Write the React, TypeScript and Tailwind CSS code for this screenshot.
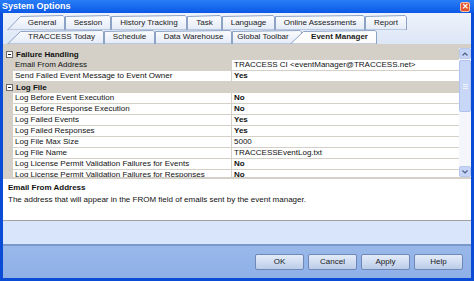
import React from "react";

type Row = { cat?: string; name?: string; value?: string; bold?: boolean; selected?: boolean };

const rows: Row[] = [
  { cat: "Failure Handling" },
  { name: "Email From Address", value: "TRACCESS CI <eventManager@TRACCESS.net>", selected: true },
  { name: "Send Failed Event Message to Event Owner", value: "Yes", bold: true },
  { cat: "Log File" },
  { name: "Log Before Event Execution", value: "No", bold: true },
  { name: "Log Before Response Execution", value: "No", bold: true },
  { name: "Log Failed Events", value: "Yes", bold: true },
  { name: "Log Failed Responses", value: "Yes", bold: true },
  { name: "Log File Max Size", value: "5000" },
  { name: "Log File Name", value: "TRACCESSEventLog.txt" },
  { name: "Log License Permit Validation Failures for Events", value: "No", bold: true },
  { name: "Log License Permit Validation Failures for Responses", value: "No", bold: true },
];

// tab shape drawn as svg so the slanted edges come out right
const Tab: React.FC<{
  label: string;
  w: number;
  h: number;
  cls: string;
  slant?: boolean;
  active?: boolean;
}> = ({ label, w, h, cls, slant, active }) => {
  const s = slant ? 13 : 0;
  const pts = `0.5,${h} ${s + 0.5},1.5 ${w - 2},0.5 ${w - 0.5},2 ${w - 0.5},${h}`;
  const id = active ? "tabA" : "tabI";
  return (
    <div className={`relative flex shrink-0 items-center justify-center ${cls}`}>
      <svg className="absolute inset-0" width={w} height={h}>
        <defs>
          <linearGradient id={id} x1="0" y1="0" x2="0" y2="1">
            <stop offset="0" stopColor={active ? "#ffffff" : "#fbfcfe"} />
            <stop offset="1" stopColor={active ? "#fbfbfd" : "#e4ebf7"} />
          </linearGradient>
        </defs>
        <polygon points={pts} fill={`url(#${id})`} stroke="#8da3c6" strokeWidth="1" />
      </svg>
      <span
        className={`relative text-[8px] text-[#1a1a1a] ${active ? "font-bold" : ""} ${slant ? "pl-[12px]" : ""}`}
      >
        {label}
      </span>
    </div>
  );
};

const Btn: React.FC<{ label: string }> = ({ label }) => (
  <button className="flex h-[16px] w-[49px] items-center justify-center rounded-[2px] border border-[#7088b8] bg-gradient-to-b from-[#e4ecf9] to-[#bccde9] text-[8px] text-[#1a1a1a]">
    {label}
  </button>
);

export default function App() {
  return (
    <div
      className="flex h-[281px] w-[474px] flex-col bg-[#0b4cd6] px-[3px] pb-[3px]"
      style={{ fontFamily: '"Liberation Sans", Arial, sans-serif' }}
    >
      {/* title bar */}
      <div className="-mx-[3px] flex h-[13px] items-center justify-between bg-gradient-to-b from-[#2a7df7] to-[#0a58e6] pl-[2px] pr-[4px]">
        <span className="text-[9px] font-bold text-white">System Options</span>
        <div className="flex h-[10px] w-[10px] items-center justify-center rounded-[2px] border border-[#f3c0aa] bg-[#e2552c] text-[8px] font-bold leading-none text-white">
          ✕
        </div>
      </div>

      <div className="flex flex-1 flex-col bg-[#d4d0c8]">
        {/* tabs */}
        <div className="flex h-[31px] flex-col bg-gradient-to-b from-[#eef3fb] to-[#dce6f6] pt-[2px] pl-[4px]">
          <div className="flex h-[15px]">
            <Tab label="General" w={58} h={15} cls="w-[58px] h-[15px]" slant />
            <Tab label="Session" w={46} h={15} cls="w-[46px] h-[15px]" />
            <Tab label="History Tracking" w={76} h={15} cls="w-[76px] h-[15px]" />
            <Tab label="Task" w={35} h={15} cls="w-[35px] h-[15px]" />
            <Tab label="Language" w={53} h={15} cls="w-[53px] h-[15px]" />
            <Tab label="Online Assessments" w={90} h={15} cls="w-[90px] h-[15px]" />
            <Tab label="Report" w={42} h={15} cls="w-[42px] h-[15px]" />
          </div>
          <div className="flex h-[14px]">
            <Tab label="TRACCESS Today" w={97} h={14} cls="w-[97px] h-[14px]" slant />
            <Tab label="Schedule" w={51} h={14} cls="w-[51px] h-[14px]" />
            <Tab label="Data Warehouse" w={77} h={14} cls="w-[77px] h-[14px]" />
            <Tab label="Global Toolbar" w={70} h={14} cls="w-[70px] h-[14px] pr-[8px]" />
            <div className="relative z-10 -ml-[12px]">
              <Tab label="Event Manager" w={87} h={14} cls="w-[87px] h-[14px]" slant active />
            </div>
          </div>
        </div>

        {/* property grid */}
        <div className="mt-[4px] flex h-[129px] bg-white">
          <div className="flex flex-1 flex-col overflow-hidden">
            {rows.map((r, i) =>
              r.cat ? (
                <div
                  key={i}
                  className={`flex shrink-0 items-center bg-[#d4d0c8] ${i === 0 ? "h-[12px] pt-[1px]" : "h-[11px]"}`}
                >
                  <div className="flex w-[12px] justify-center">
                    <div className="flex h-[7px] w-[7px] items-center justify-center border border-[#6a6a6a] bg-white">
                      <div className="h-px w-[3px] bg-[#222]" />
                    </div>
                  </div>
                  <span className="pl-[1px] text-[8px] font-bold leading-none text-[#111]">{r.cat}</span>
                </div>
              ) : (
                <div key={i} className="flex h-[11px] shrink-0">
                  <div className="w-[10px] bg-[#d4d0c8]" />
                  <div
                    className={`flex w-[219px] items-center border-b border-r border-[#d4d0c8] pl-[2px] text-[8px] leading-none text-[#111] ${r.selected ? "bg-[#d4d0c8]" : "bg-white"}`}
                  >
                    <span className="whitespace-nowrap">{r.name}</span>
                  </div>
                  <div
                    className={`flex flex-1 items-center border-b border-[#d4d0c8] pl-[2px] text-[8px] leading-none text-[#111] ${r.bold ? "font-bold" : ""}`}
                  >
                    <span className="whitespace-nowrap">{r.value}</span>
                  </div>
                </div>
              ),
            )}
          </div>
          {/* scrollbar */}
          <div className="flex w-[12px] flex-col bg-[#f4f6fb]">
            <div className="flex h-[11px] items-center justify-center rounded-[2px] border border-[#b8c8ec] bg-[#c6d5f7]">
              <svg width="6" height="4" viewBox="0 0 6 4">
                <path d="M0.5 3.5 L3 1 L5.5 3.5" fill="none" stroke="#4d6185" strokeWidth="1.2" />
              </svg>
            </div>
            <div className="mt-[1px] flex h-[52px] flex-col items-center justify-center gap-[1px] rounded-[2px] border border-[#b0c3ee] bg-[#c8d7f8]">
              <div className="h-px w-[5px] bg-[#eef3ff]" />
              <div className="h-px w-[5px] bg-[#eef3ff]" />
              <div className="h-px w-[5px] bg-[#eef3ff]" />
            </div>
            <div className="flex-1" />
            <div className="flex h-[11px] items-center justify-center rounded-[2px] border border-[#b8c8ec] bg-[#c6d5f7]">
              <svg width="6" height="4" viewBox="0 0 6 4">
                <path d="M0.5 0.5 L3 3 L5.5 0.5" fill="none" stroke="#4d6185" strokeWidth="1.2" />
              </svg>
            </div>
          </div>
        </div>

        {/* description */}
        <div className="mt-[2px] flex h-[42px] flex-col gap-[4px] border-b border-[#a0a0a0] bg-white px-[5px] pt-[5px]">
          <span className="text-[8px] font-bold leading-none text-[#111]">Email From Address</span>
          <span className="text-[8px] leading-none text-[#111]">
            The address that will appear in the FROM field of emails sent by the event manager.
          </span>
        </div>

        <div className="h-[25px] border-b-2 border-[#7b98cc] bg-[#d8e5fb]" />

        {/* footer */}
        <div className="flex flex-1 items-center justify-end gap-[4px] bg-gradient-to-b from-[#99b8e9] to-[#8eb0e8] pr-[8px]">
          <Btn label="OK" />
          <Btn label="Cancel" />
          <Btn label="Apply" />
          <Btn label="Help" />
        </div>
      </div>
    </div>
  );
}
